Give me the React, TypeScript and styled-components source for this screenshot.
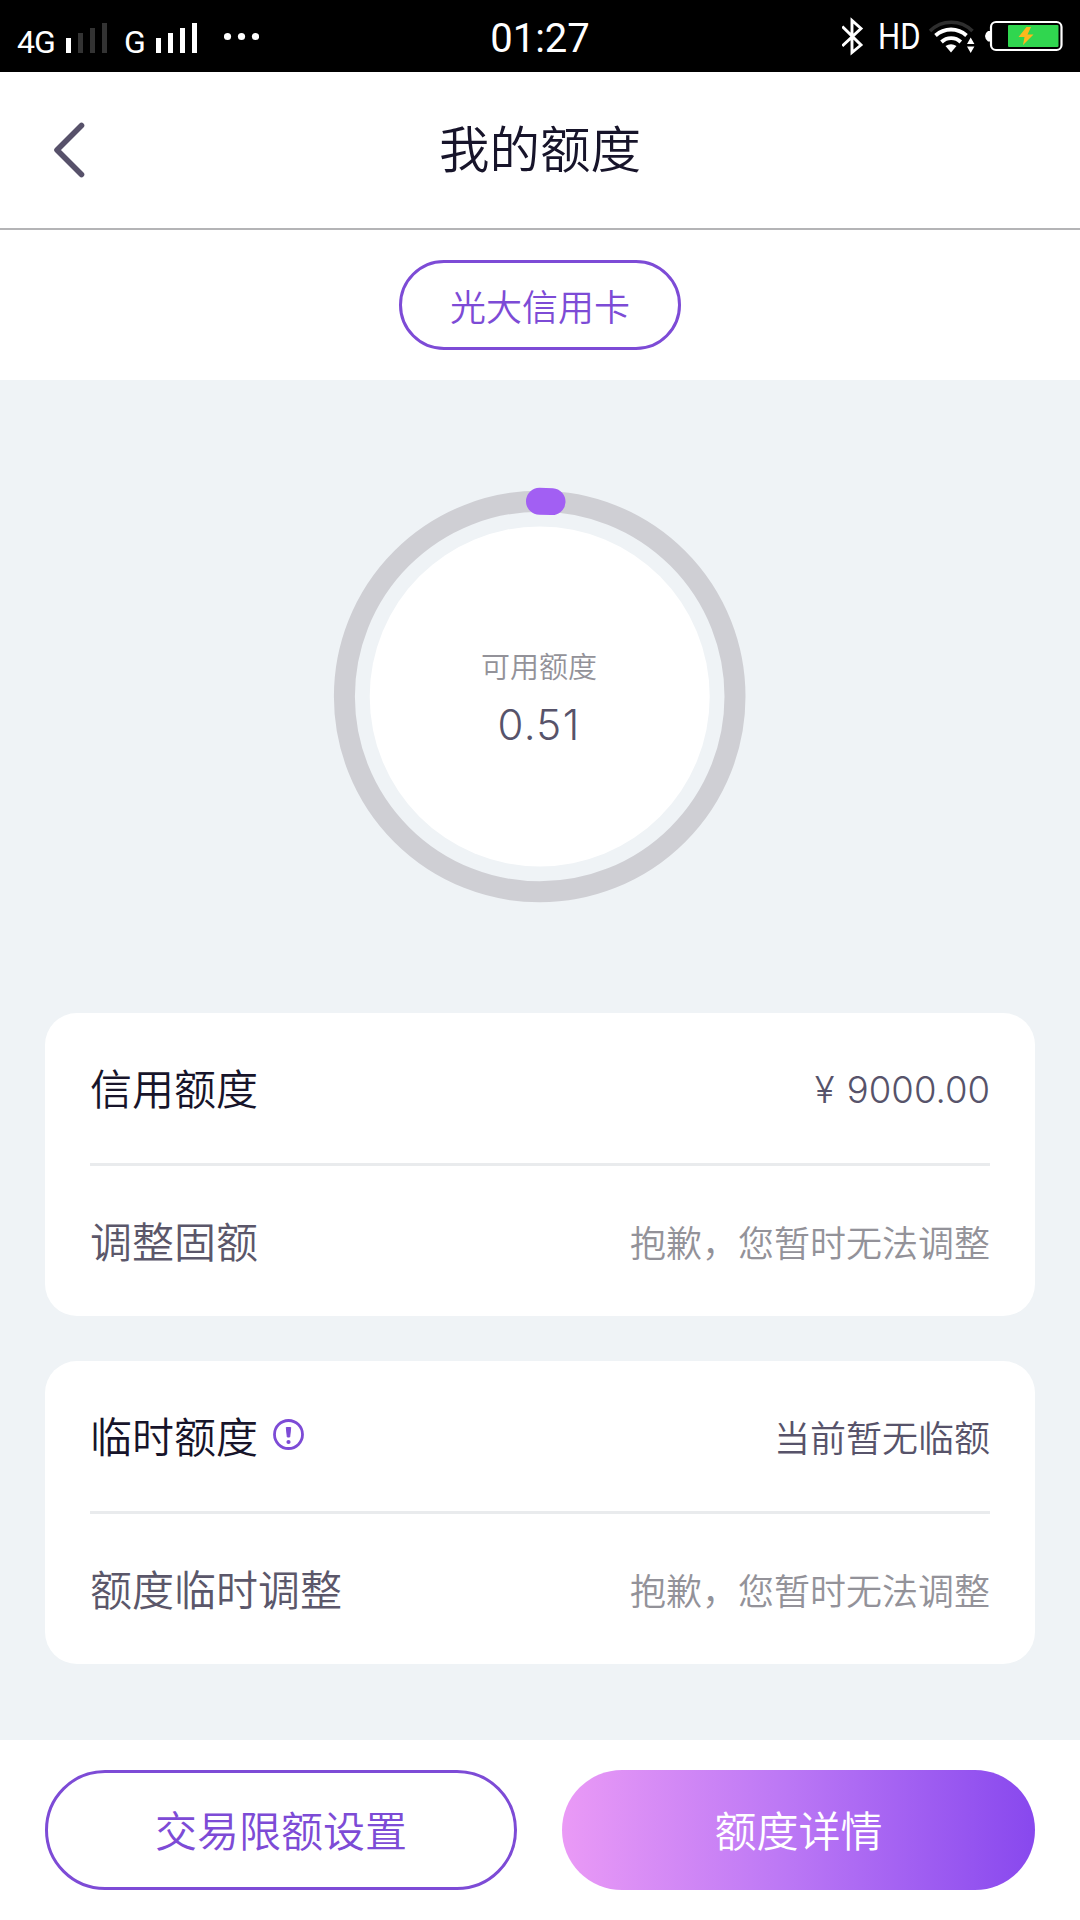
import React from "react";
import styled, { createGlobalStyle } from "styled-components";

const GlobalStyle = createGlobalStyle`
  * { box-sizing: border-box; }
  body {
    margin: 0;
    background: #ffffff;
    font-family: "Noto Sans CJK SC", sans-serif;
    font-weight: 350;
  }
`;

const Screen = styled.div`
  display: flex;
  flex-direction: column;
  width: 1080px;
  height: 1920px;
  overflow: hidden;
  background: #ffffff;
`;

const StatusBar = styled.div`
  display: grid;
  grid-template-columns: 1fr auto 1fr;
  height: 72px;
  flex: none;
  background: #000000;
  color: #ffffff;
  font-family: Roboto, sans-serif;
  font-weight: 400;
`;

const StatusSide = styled.div<{ $end?: boolean }>`
  display: flex;
  align-items: flex-start;
  justify-content: ${(p) => (p.$end ? "flex-end" : "flex-start")};
  padding: ${(p) => (p.$end ? "17px 17px 0 0" : "23px 0 0 17px")};
`;

const Network = styled.span<{ $width: number }>`
  width: ${(p) => p.$width}px;
  font-size: 32px;
  line-height: 38px;
  letter-spacing: -1px;
  white-space: nowrap;
`;

const Signal = styled.svg<{ $after: number }>`
  flex: none;
  margin-right: ${(p) => p.$after}px;
`;

const Clock = styled.span`
  font-size: 40px;
  line-height: 77px;
`;

const HdLabel = styled.span`
  width: 40px;
  margin: 0 8px 0 16px;
  font-size: 37px;
  font-weight: 400;
  line-height: 39px;
  transform: translateX(-2px) scaleX(0.84);
  transform-origin: left center;
  white-space: nowrap;
`;

const Header = styled.header`
  display: grid;
  grid-template-columns: 1fr auto 1fr;
  align-items: center;
  flex: none;
  height: 158px;
  padding: 0 51px;
  border-bottom: 2px solid #b4b4b6;
`;

const BackButton = styled.button`
  display: flex;
  width: 40px;
  padding: 0;
  border: 0;
  background: none;
`;

const Title = styled.h1`
  margin: 0 0 8px;
  font-size: 50.5px;
  line-height: 74px;
  font-weight: 350;
  color: #17142a;
`;

const CardPicker = styled.div`
  display: flex;
  align-items: center;
  justify-content: center;
  flex: none;
  height: 150px;
`;

const PillButton = styled.button`
  display: flex;
  align-items: center;
  justify-content: center;
  width: 282px;
  height: 90px;
  padding: 0;
  border: 3px solid #7d4bd6;
  border-radius: 45px;
  background: #ffffff;
  color: #7d4bd6;
  font: inherit;
  font-size: 36px;
`;

const Content = styled.main`
  display: flex;
  flex-direction: column;
  flex: 1;
  padding: 0 45px;
  background: #eff3f6;
`;

const Gauge = styled.section`
  display: grid;
  justify-items: center;
  height: 633px;
  padding-top: 100px;
`;

const GaugeRing = styled.svg`
  grid-area: 1 / 1;
`;

const GaugeText = styled.div`
  grid-area: 1 / 1;
  display: flex;
  flex-direction: column;
  align-items: center;
  padding: 163px 2px 0 0;
`;

const GaugeLabel = styled.span`
  font-size: 29px;
  line-height: 44px;
  color: #939299;
`;

const GaugeValue = styled.span`
  margin-top: 13px;
  font-family: Inter, sans-serif;
  font-weight: 300;
  font-size: 42px;
  line-height: 50px;
  letter-spacing: 1.4px;
  color: #57536a;
`;

const Card = styled.section`
  margin-bottom: 45px;
  padding: 0 45px;
  border-radius: 32px;
  background: #ffffff;
`;

const Row = styled.div`
  display: flex;
  align-items: center;
  justify-content: space-between;
  height: 150px;
  & + & {
    height: 153px;
    border-top: 3px solid #e9ebed;
  }
`;

const RowLabel = styled.div<{ $strong?: boolean }>`
  display: flex;
  align-items: center;
  gap: 15px;
  padding-bottom: 3px;
  font-size: 42px;
  color: ${(p) => (p.$strong ? "#17142a" : "#5b576a")};
`;

const RowValue = styled.div<{ $muted?: boolean }>`
  font-size: 36px;
  color: ${(p) => (p.$muted ? "#939299" : "#57536a")};
`;

const Amount = styled(RowValue)`
  padding-top: 4px;
  font-family: Inter, sans-serif;
  font-size: 36.5px;
  font-weight: 300;
  word-spacing: 2px;
`;

const Footer = styled.footer`
  display: grid;
  grid-template-columns: 472px 473px;
  gap: 45px;
  flex: none;
  height: 180px;
  padding: 30px 45px;
  background: #ffffff;
`;

const FooterButton = styled.button<{ $primary?: boolean }>`
  display: flex;
  align-items: center;
  justify-content: center;
  height: 120px;
  padding: 0 0 3px;
  border: ${(p) => (p.$primary ? "0" : "3px solid #7d4bd6")};
  border-radius: 60px;
  background: ${(p) =>
    p.$primary ? "linear-gradient(90deg, #ea9af6 0%, #bb77f5 48%, #8848ee 100%)" : "#ffffff"};
  color: ${(p) => (p.$primary ? "#ffffff" : "#7d4bd6")};
  font: inherit;
  font-size: 42px;
`;

function SignalBars({ active, after }: { active: number; after: number }) {
  return (
    <Signal $after={after} width="41" height="30" viewBox="0 0 41 30">
      {[0, 1, 2, 3].map((i) => (
        <rect
          key={i}
          x={i * 12}
          y={15 - i * 5}
          width="5"
          height={15 + i * 5}
          fill={i < active ? "#ffffff" : "#333333"}
        />
      ))}
    </Signal>
  );
}

export default function App() {
  return (
    <>
      <GlobalStyle />
      <Screen>
        <StatusBar>
          <StatusSide>
            <Network $width={49}>4G</Network>
            <SignalBars active={1} after={17} />
            <Network $width={32}>G</Network>
            <SignalBars active={4} after={27} />
            <svg width="35" height="27" viewBox="0 0 35 27" fill="#ffffff">
              <circle cx="3.5" cy="13.5" r="3.6" />
              <circle cx="17.5" cy="13.5" r="3.6" />
              <circle cx="31.5" cy="13.5" r="3.6" />
            </svg>
          </StatusSide>
          <Clock>01:27</Clock>
          <StatusSide $end>
            <svg width="22" height="39" viewBox="0 0 22 39" fill="none" stroke="#ffffff" strokeWidth="2.9">
              <path d="M0.3 9.5 L19 28 L10 35.5 V3.5 L19 11.5 L0.3 29" />
            </svg>
            <HdLabel>HD</HdLabel>
            <svg width="48" height="38" viewBox="0 0 48 38" fill="none">
              <path d="M2 14 A30 30 0 0 1 44.5 14" stroke="#2e2e2e" strokeWidth="3.5" />
              <path d="M7.5 18.5 A23 23 0 0 1 38.5 18.5" stroke="#ffffff" strokeWidth="3.8" />
              <path d="M13.5 25 A14 14 0 0 1 32.8 25" stroke="#ffffff" strokeWidth="3.8" />
              <path d="M17.5 29 Q23 25.5 28.5 29 L23 35.5 Z" fill="#ffffff" />
              <path d="M39 27 L42.7 20.5 L46.4 27 Z M39 29.5 L42.7 36 L46.4 29.5 Z" fill="#ffffff" />
            </svg>
            <svg width="87" height="38" viewBox="0 0 87 38">
              <path d="M14 14 H12 Q9 16 9 19 Q9 22 12 24.5 H14 Z" fill="#ffffff" />
              <rect x="15" y="5" width="70.5" height="28" rx="5" fill="#000000" stroke="#ffffff" strokeWidth="2.2" />
              <rect x="32" y="8" width="50.5" height="22" rx="1" fill="#30d64f" />
              <path d="M50.5 10 L42.5 20 H48.5 L47 28 L57.5 17.5 H51.5 L55 10 Z" fill="#ffb81c" />
            </svg>
          </StatusSide>
        </StatusBar>

        <Header>
          <BackButton aria-label="返回">
            <svg width="40" height="60" viewBox="0 0 40 60" fill="none">
              <path
                d="M30.5 5.5 L6 30 L30.5 54.5"
                stroke="#57516a"
                strokeWidth="5.6"
                strokeLinecap="round"
                strokeLinejoin="round"
              />
            </svg>
          </BackButton>
          <Title>我的额度</Title>
        </Header>

        <CardPicker>
          <PillButton>光大信用卡</PillButton>
        </CardPicker>

        <Content>
          <Gauge>
            <GaugeRing width="434" height="434" viewBox="0 0 434 434" fill="none">
              <circle cx="216.7" cy="216.5" r="195.3" stroke="#cfcfd4" strokeWidth="21" />
              <circle cx="216.7" cy="216.5" r="170" fill="#ffffff" />
              <path
                d="M216.5 21.2 A195.3 195.3 0 0 1 229 21.6"
                stroke="#a25ff3"
                strokeWidth="27"
                strokeLinecap="round"
              />
            </GaugeRing>
            <GaugeText>
              <GaugeLabel>可用额度</GaugeLabel>
              <GaugeValue>0.51</GaugeValue>
            </GaugeText>
          </Gauge>

          <Card>
            <Row>
              <RowLabel $strong>信用额度</RowLabel>
              <Amount>¥ 9000.00</Amount>
            </Row>
            <Row>
              <RowLabel>调整固额</RowLabel>
              <RowValue $muted>抱歉，您暂时无法调整</RowValue>
            </Row>
          </Card>

          <Card>
            <Row>
              <RowLabel $strong>
                临时额度
                <svg width="31" height="31" viewBox="0 0 31 31">
                  <circle cx="15.5" cy="15.5" r="14" fill="none" stroke="#7d4bd6" strokeWidth="2.8" />
                  <path d="M13.3 8.5 H17.7 L16.7 18 H14.3 Z" fill="#7d4bd6" stroke="#7d4bd6" strokeLinejoin="round" />
                  <circle cx="15.5" cy="23" r="2.1" fill="#7d4bd6" />
                </svg>
              </RowLabel>
              <RowValue>当前暂无临额</RowValue>
            </Row>
            <Row>
              <RowLabel>额度临时调整</RowLabel>
              <RowValue $muted>抱歉，您暂时无法调整</RowValue>
            </Row>
          </Card>
        </Content>

        <Footer>
          <FooterButton>交易限额设置</FooterButton>
          <FooterButton $primary>额度详情</FooterButton>
        </Footer>
      </Screen>
    </>
  );
}
